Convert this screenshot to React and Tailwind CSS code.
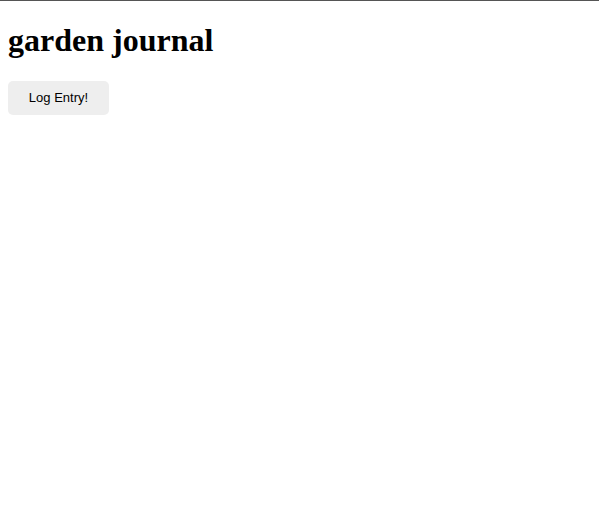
export default function App() {
  return (
    <div className="min-h-screen bg-white border-t border-[#555] px-2">
      <h1 className="font-['Liberation_Serif',serif] font-bold text-[32px] leading-[37px] text-black pt-[21px] mb-[22px]">
        garden journal
      </h1>
      <button className="w-[101px] h-[34px] rounded-[5px] bg-[#eeeeee] font-['Liberation_Sans',Arial,sans-serif] text-[13px] text-black">
        Log Entry!
      </button>
    </div>
  );
}
